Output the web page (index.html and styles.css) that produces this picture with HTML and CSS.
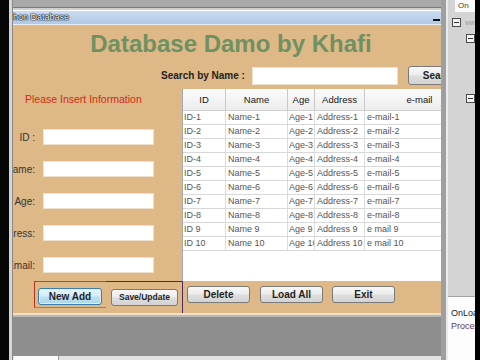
FILE: index.html
```html
<!DOCTYPE html>
<html>
<head>
<meta charset="utf-8">
<link rel="stylesheet" href="styles.css">
</head>
<body>
<div class="screen">
  <div class="edge-l"></div>
  <div class="frame-l"></div>
  <div class="ide">
    <div class="ide-top"></div>
    <div class="titlebar"><span class="title">hon Database</span><span class="min"></span></div>
    <div class="form">
      <div class="heading">Database Damo by Khafi</div>
      <div class="search">
        <span class="search-label">Search by Name :</span>
        <input class="search-input" type="text">
        <button class="btn search-btn">Search</button>
      </div>
      <div class="body">
        <div class="left">
          <div class="notice">Please Insert Information</div>
          <div class="fields">
            <div class="field"><span class="lbl">ID :</span><input class="txt" type="text"></div>
            <div class="field"><span class="lbl">Name:</span><input class="txt" type="text"></div>
            <div class="field"><span class="lbl">Age:</span><input class="txt" type="text"></div>
            <div class="field"><span class="lbl">Address:</span><input class="txt" type="text"></div>
            <div class="field"><span class="lbl">Email:</span><input class="txt" type="text"></div>
          </div>
        </div>
        <div class="grid">
          <table>
            <colgroup><col class="c-id"><col class="c-name"><col class="c-age"><col class="c-addr"><col class="c-mail"></colgroup>
            <thead>
              <tr><th>ID</th><th>Name</th><th>Age</th><th>Address</th><th>e-mail</th></tr>
            </thead>
            <tbody>
              <tr><td>ID-1</td><td>Name-1</td><td>Age-1</td><td>Address-1</td><td>e-mail-1</td></tr>
              <tr><td>ID-2</td><td>Name-2</td><td>Age-2</td><td>Address-2</td><td>e-mail-2</td></tr>
              <tr><td>ID-3</td><td>Name-3</td><td>Age-3</td><td>Address-3</td><td>e-mail-3</td></tr>
              <tr><td>ID-4</td><td>Name-4</td><td>Age-4</td><td>Address-4</td><td>e-mail-4</td></tr>
              <tr><td>ID-5</td><td>Name-5</td><td>Age-5</td><td>Address-5</td><td>e-mail-5</td></tr>
              <tr><td>ID-6</td><td>Name-6</td><td>Age-6</td><td>Address-6</td><td>e-mail-6</td></tr>
              <tr><td>ID-7</td><td>Name-7</td><td>Age-7</td><td>Address-7</td><td>e-mail-7</td></tr>
              <tr><td>ID-8</td><td>Name-8</td><td>Age-8</td><td>Address-8</td><td>e-mail-8</td></tr>
              <tr><td>ID 9</td><td>Name 9</td><td>Age 9</td><td>Address 9</td><td>e mail 9</td></tr>
              <tr><td>ID 10</td><td>Name 10</td><td>Age 10</td><td>Address 10</td><td>e mail 10</td></tr>
            </tbody>
          </table>
        </div>
      </div>
      <div class="buttons">
        <div class="grp1"><button class="btn btn-focus w-new">New Add</button></div>
        <div class="grp2"><button class="btn btn-small w-save">Save/Update</button></div>
        <button class="btn w-del">Delete</button>
        <button class="btn w-load">Load All</button>
        <button class="btn w-exit">Exit</button>
      </div>
    </div>
    <div class="ide-gray"></div>
    <div class="ide-tabs"><span class="tab"></span></div>
  </div>
  <div class="frame-r"></div>
  <div class="panel">
    <div class="tree">
      <div class="tree-head">On</div>
      <div class="node n1"><span class="minus"></span><span class="node-txt">www</span></div>
      <div class="node n2"><span class="minus"></span></div>
      <div class="node n3"><span class="minus"></span></div>
    </div>
    <div class="props">
      <div class="p1">OnLoad</div>
      <div class="p2">Process</div>
    </div>
  </div>
  <div class="edge-r"></div>
</div>
</body>
</html>
```

FILE: styles.css
```css
html, body {
  margin: 0;
  padding: 0;
  background: #000;
}
body {
  width: 480px;
  height: 360px;
  overflow: hidden;
  font-family: "Liberation Sans", Arial, sans-serif;
}
.screen {
  display: flex;
  width: 480px;
  height: 360px;
}
.edge-l { width: 9px; background: #050505; flex: none; }
.frame-l {
  width: 3px;
  flex: none;
  background: #d6d6d6;
  border-right: 1px solid #8a8a8a;
}
.ide {
  width: 428px;
  flex: none;
  display: flex;
  flex-direction: column;
  overflow: hidden;
}
.ide-top {
  height: 11px;
  flex: none;
  background: linear-gradient(#a9a9a9 0, #a9a9a9 7px, #7c7c7c 7px, #7c7c7c 8px, #cfcfcf 8px, #cfcfcf 10px, #ffffff 10px);
}
.titlebar {
  height: 14px;
  flex: none;
  display: flex;
  background: linear-gradient(#c9dcf2, #b2c9e5);
  border-bottom: 1px solid #e8eef6;
  box-sizing: border-box;
}
.title {
  font-size: 9px;
  line-height: 13px;
  color: #ffffff;
  text-shadow: 0 0 1px #000, 0 0 1px #000, 0 0 1px #1a2a40, 0 0 2px #2a3e5a;
}
.min {
  margin-left: auto;
  margin-right: 1px;
  margin-top: 8px;
  width: 7px;
  height: 2px;
  background: #111;
}
.form {
  height: 288px;
  flex: none;
  background: #deb887;
  overflow: hidden;
  display: flex;
  flex-direction: column;
}
.heading {
  margin-top: 5px;
  height: 28px;
  line-height: 28px;
  font-size: 24px;
  font-weight: bold;
  color: #6f9161;
  text-align: center;
  padding-left: 8px;
  white-space: nowrap;
}
.search {
  margin-top: 8px;
  height: 19px;
  display: flex;
  align-items: center;
  padding-left: 148px;
  white-space: nowrap;
}
.search-label {
  width: 84px;
  flex: none;
  font-size: 10px;
  font-weight: bold;
  color: #222;
}
.search-input {
  margin: 0 0 0 7px;
  width: 146px;
  min-width: 146px;
  height: 18px;
  box-sizing: border-box;
  border: 1px solid #eee2cc;
  background: #fff;
  padding: 0;
  flex: none;
}
.body {
  margin-top: 4px;
  height: 193px;
  display: flex;
}
.left {
  width: 169px;
  flex: none;
}
.notice {
  margin-top: 4px;
  padding-left: 12px;
  font-size: 10.5px;
  line-height: 12px;
  color: #d22c14;
  white-space: nowrap;
}
.fields {
  margin-top: 24px;
  display: flex;
  flex-direction: column;
  gap: 16px;
}
.field {
  height: 16px;
  display: flex;
  align-items: center;
}
.lbl {
  width: 22px;
  flex: none;
  display: flex;
  justify-content: flex-end;
  white-space: nowrap;
  font-size: 10px;
  color: #333;
}
.txt {
  margin: 0 0 0 8px;
  width: 111px;
  height: 16px;
  box-sizing: border-box;
  border: 1px solid #eee2cc;
  background: #fff;
  padding: 0;
}
.grid {
  flex: 1;
  background: #fff;
  border-left: 1px solid #a9a9a9;
  overflow: hidden;
}
table {
  border-collapse: separate;
  border-spacing: 0;
  table-layout: fixed;
  width: 292px;
}
.c-id { width: 43px; }
.c-name { width: 62px; }
.c-age { width: 27px; }
.c-addr { width: 50px; }
.c-mail { width: 110px; }
th {
  font-weight: normal;
  font-size: 9.5px;
  color: #151515;
  line-height: 21px;
  padding: 0;
  background: linear-gradient(#fbfbfb, #ededed);
  border-right: 1px solid #c9c9c9;
  border-bottom: 1px solid #d0d0d0;
  text-align: center;
  white-space: nowrap;
  overflow: hidden;
}
td {
  font-size: 9px;
  color: #555;
  line-height: 13px;
  padding: 0 0 0 1px;
  border-right: 1px solid #dcdcdc;
  border-bottom: 1px solid #d8d8d8;
  white-space: nowrap;
  overflow: hidden;
}
td:nth-child(2), td:nth-child(4), td:nth-child(5) { padding-left: 2px; }
.buttons {
  height: 32px;
  display: flex;
  align-items: flex-start;
}
.grp1 {
  margin-left: 21px;
  width: 72px;
  height: 27px;
  box-sizing: border-box;
  border-top: 1px solid #c8441e;
  border-left: 1px solid #b8321c;
  border-bottom: 1px solid #e6672a;
  padding: 4px 0 0 3px;
  flex: none;
}
.grp2 {
  width: 77px;
  height: 32px;
  box-sizing: border-box;
  border-top: 1px solid #4a2a63;
  border-right: 1px solid #4a2a63;
  padding: 4px 0 0 5px;
  flex: none;
}
.btn {
  height: 17px;
  box-sizing: border-box;
  border: 1px solid #7a7a7a;
  border-radius: 3px;
  background: linear-gradient(#f8f8f8, #ececec 48%, #dedede 52%, #d3d3d3);
  font-family: "Liberation Sans", Arial, sans-serif;
  font-size: 10px;
  font-weight: bold;
  color: #1f1f1f;
  padding: 0;
  margin: 0;
  line-height: 15px;
  text-align: center;
  white-space: nowrap;
  flex: none;
}
.search .search-btn {
  margin-left: 10px;
  width: 63px;
  min-width: 63px;
  height: 19px;
  line-height: 17px;
}
.btn-focus {
  border-color: #3c7caf;
  background: linear-gradient(#e8f5fc, #d3ecf8 48%, #bde0f2 52%, #acd6ec);
  box-shadow: inset 0 0 0 1px #d8f0fb;
}
.btn-small { font-size: 8.5px; }
.buttons > .btn { margin-top: 5px; }
.w-new { width: 64px; }
.w-save { width: 67px; }
.w-del { width: 63px; margin-left: 4px; }
.w-load { width: 63px; margin-left: 10px; }
.w-exit { width: 63px; margin-left: 9px; }
.ide-gray {
  height: 41px;
  flex: none;
  background: #8e8e8e;
  border-top: 2px solid #efe2c7;
  box-shadow: inset 0 2px 0 #b8b8b8;
}
.ide-tabs {
  height: 4px;
  flex: none;
  background: #e2e2e2;
  display: flex;
}
.tab {
  width: 44px;
  background: #fbfbfb;
  border-right: 1px solid #9a9a9a;
  margin-left: 1px;
}
.frame-r {
  width: 5px;
  flex: none;
  background: #9f9f9f;
}
.panel {
  width: 27px;
  flex: none;
  border-left: 2px solid #ebebeb;
  display: flex;
  flex-direction: column;
  overflow: hidden;
}
.tree {
  height: 296px;
  flex: none;
  background: #d4d4d4;
  display: flex;
  flex-direction: column;
}
.tree-head {
  margin-left: 7px;
  height: 12px;
  background: #fafafa;
  font-size: 8px;
  line-height: 12px;
  color: #444;
  padding-left: 3px;
  overflow: hidden;
  white-space: nowrap;
}
.node {
  display: flex;
  align-items: center;
  height: 9px;
}
.n1 { margin-top: 6px; margin-left: 4px; }
.n2 { margin-top: 7px; margin-left: 18px; }
.n3 { margin-top: 51px; margin-left: 18px; }
.minus {
  width: 9px;
  height: 9px;
  box-sizing: border-box;
  border: 1px solid #4a4a4a;
  background: #f4f4f4;
  display: flex;
  align-items: center;
  justify-content: center;
  flex: none;
}
.minus::after {
  content: "";
  width: 5px;
  height: 1px;
  background: #333;
}
.node-txt {
  margin-left: 4px;
  font-size: 7px;
  color: #a0a0a0;
  white-space: nowrap;
}
.props {
  flex: 1;
  background: #fdfdfd;
  border-top: 1px solid #a3a3a3;
  padding: 10px 0 0 3px;
  font-size: 9px;
  line-height: 13px;
  white-space: nowrap;
}
.p1 { color: #1c1c2c; }
.p2 { color: #5b3a64; }
.edge-r { width: 5px; flex: none; background: #000; }
```
